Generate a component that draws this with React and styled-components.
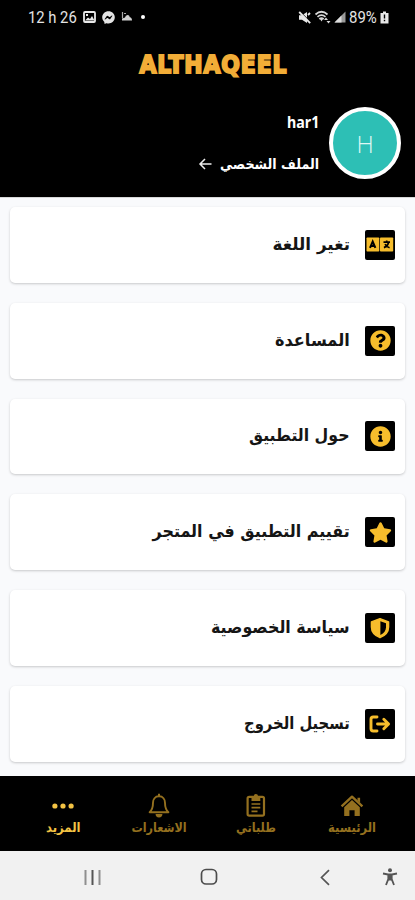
import React from "react";
import styled, { createGlobalStyle } from "styled-components";
import {
  FaQuestionCircle,
  FaInfoCircle,
  FaStar,
  FaFacebookMessenger,
} from "react-icons/fa";

const LanguageIcon = () => (
  <svg width="28" height="15" viewBox="0 0 28 15">
    <rect x="0.5" y="0.5" width="12.8" height="14" rx="0.8" fill="#f6bd2c" />
    <rect x="14" y="0.5" width="13.2" height="14" rx="0.8" fill="#f6bd2c" />
    <path
      d="M4 10.800 6.700 4.600 9.400 10.800M5 9h3.400"
      fill="none"
      stroke="#000"
      strokeWidth="2"
    />
    <path
      d="M17.500 5.200h6.500M20.700 3.600v1.600M22.700 5.400c-.7 2.600-2.400 4.400-4.800 5.200M19 7.200c1 1.900 2.300 3 4.600 3.600"
      fill="none"
      stroke="#000"
      strokeWidth="1.700"
    />
  </svg>
);

const ShieldIcon = () => (
  <svg width="22" height="22" viewBox="0 0 22 22">
    <path
      d="M11 1.600 19.600 5v5c0 5-3.400 8.600-8.600 10.700C5.800 18.600 2.400 15 2.400 10V5Z"
      fill="#f6bd2c"
      stroke="#f6bd2c"
      strokeWidth="1.4"
      strokeLinejoin="round"
    />
    <path d="M11.400 4.200 17 6.300v4c0 3.300-2 5.900-5.600 7.700Z" fill="#000" />
  </svg>
);

const LogoutIcon = () => (
  <svg width="22" height="18" viewBox="0 0 22 18">
    <g
      fill="none"
      stroke="#f6bd2c"
      strokeWidth="2.9"
      strokeLinecap="round"
      strokeLinejoin="round"
    >
      <path d="M8 2H4.200Q2 2 2 4.200v9.600Q2 16 4.200 16H8" />
      <path d="M8.500 9H19M14.800 4.200 19.600 9l-4.800 4.800" />
    </g>
  </svg>
);

const HomeIcon = () => (
  <svg width="24" height="22" viewBox="0 0 24 22">
    <path
      d="M1.600 12.300 12 2.700l10.400 9.600"
      fill="none"
      stroke="currentColor"
      strokeWidth="2.400"
      strokeLinejoin="round"
    />
    <path
      d="M17.500 3.700h2.600v5l-2.600-2.200ZM12 6l7.800 7.200V22h-5.200v-5.700H9.400V22H4.200v-8.800Z"
      fill="currentColor"
    />
  </svg>
);

const OrdersIcon = () => (
  <svg width="20" height="24" viewBox="0 0 20 24">
    <g fill="none" stroke="currentColor" strokeWidth="2.200">
      <rect x="1.600" y="3.800" width="16.400" height="18.800" rx="1.600" />
      <path d="M5.500 11h8.800M5.500 14.700h8.800M5.500 18.400h6" strokeWidth="1.700" />
    </g>
    <path
      d="M5.500 3h2.300a2.100 2.100 0 0 1 4.200 0h2.300v5H5.500Z"
      fill="currentColor"
    />
  </svg>
);

const BellIcon = () => (
  <svg width="22" height="25" viewBox="0 0 22 25">
    <path
      d="M11 3.300c-4 0-6 3-6 6.500 0 5-1.300 7.600-3.400 9.400h18.800c-2.100-1.800-3.400-4.400-3.400-9.400 0-3.500-2-6.500-6-6.500Z"
      fill="none"
      stroke="currentColor"
      strokeWidth="1.900"
      strokeLinejoin="round"
    />
    <path
      d="M10 .8h2v2.700h-2ZM7.600 21h6.800a3.400 3.400 0 0 1-6.800 0Z"
      fill="currentColor"
    />
  </svg>
);

const MoreIcon = () => (
  <svg width="22" height="9" viewBox="0 0 22 9" fill="currentColor">
    <circle cx="2.900" cy="5" r="2.600" />
    <circle cx="11" cy="5" r="2.600" />
    <circle cx="19.100" cy="5" r="2.600" />
  </svg>
);

const menu = [
  { label: "تغير اللغة", icon: <LanguageIcon />, width: 77 },
  { label: "المساعدة", icon: <FaQuestionCircle size={21} />, width: 75 },
  { label: "حول التطبيق", icon: <FaInfoCircle size={21} />, width: 101 },
  { label: "تقييم التطبيق في المتجر", icon: <FaStar size={23} />, width: 197 },
  { label: "سياسة الخصوصية", icon: <ShieldIcon />, width: 139 },
  { label: "تسجيل الخروج", icon: <LogoutIcon />, width: 106 },
];

const tabs = [
  { label: "الرئيسية", icon: <HomeIcon />, width: 48 },
  { label: "طلباتي", icon: <OrdersIcon />, width: 40 },
  { label: "الاشعارات", icon: <BellIcon />, width: 55 },
  { label: "المزيد", icon: <MoreIcon />, width: 35, active: true },
];

// squeezes a line of text to the given width
const Fit = ({ width, children }) => {
  const ref = React.useRef(null);
  const [scale, setScale] = React.useState(1);
  React.useLayoutEffect(() => {
    setScale(width / ref.current.offsetWidth);
  }, [width]);
  return (
    <FitBox $width={width}>
      <FitText ref={ref} style={{ transform: `scaleX(${scale})` }}>
        {children}
      </FitText>
    </FitBox>
  );
};

const App = () => {
  return (
    <Screen>
      <GlobalStyle />
      <Header>
        <StatusBar>
          <StatusGroup>
            <Fit width={49}>12 h 26</Fit>
            <svg width="13" height="12" viewBox="0 0 13 12">
              <rect x="1" y="1" width="11" height="10" rx="1" fill="none" stroke="#e8e8e8" strokeWidth="1.800" />
              <path d="M2 9.500 5 6.500l2 1.500 2-3 2.500 4.500ZM3 3h2v2H3Z" fill="#e8e8e8" />
            </svg>
            <FaFacebookMessenger size={13} />
            <svg width="12" height="10" viewBox="0 0 12 10">
              <path d="M1.500 0v6M3 1.500h2" stroke="#aaa" strokeWidth="1.200" />
              <path d="M1 8.500V6.500Q3 6 4 5.500 4.500 3 6.500 3q2 0 2.300 2.200Q11 5.500 11 8.500Z" fill="#d0d0d0" />
            </svg>
            <Dot />
          </StatusGroup>
          <StatusGroup $tight>
            <svg width="13" height="13" viewBox="0 0 13 13">
              <path d="M1 4.200h3L9 1v11L4 8.800H1Z" fill="#e8e8e8" />
              <path d="m2.200.800 10.600 10.600" stroke="#000" strokeWidth="1.200" />
              <path d="m1.200 1 11 11.200M10 4l2-2" stroke="#e8e8e8" strokeWidth="1.800" />
            </svg>
            <svg width="17" height="14" viewBox="0 0 17 14">
              <g fill="none" stroke="#d8d8d8" strokeWidth="1.700">
                <path d="M1.500 4.500Q7.500-1 13.500 4.500M3.500 6.800q4-3.400 8 0M5.300 9q2.200-1.800 4.400 0" />
              </g>
              <path d="M6 9h3l-1.500 2.500ZM12 7.500l2 2.600h-4ZM14.500 13.500l-2-2.600h4Z" fill="#d8d8d8" />
            </svg>
            <svg width="12" height="12" viewBox="0 0 12 12">
              <path d="M11.500.5v11H.5Z" fill="#999" />
              <path d="M7.500 4.500v7h-7Z" fill="#ddd" />
            </svg>
            <Fit width={28}>89%</Fit>
            <svg width="9" height="13" viewBox="0 0 9 13">
              <path d="M3 .5h3V2h2.500v10.500h-8V2H3Z" fill="#e8e8e8" />
              <path d="M4.500 3.500v4M4.500 8.700v1.500" stroke="#000" strokeWidth="1.400" />
            </svg>
          </StatusGroup>
        </StatusBar>
        <Brand>
          <Fit width={148}>ALTHAQEEL</Fit>
        </Brand>
        <Profile>
          <Avatar>H</Avatar>
          <ProfileText>
            <Name>
              <Fit width={32}>har1</Fit>
            </Name>
            <ProfileLink>
              <Fit width={99}>الملف الشخصي</Fit>
              <svg width="14" height="12" viewBox="0 0 14 12">
                <path
                  d="M13.500 6H2M7 1 2 6l5 5"
                  fill="none"
                  stroke="#eee"
                  strokeWidth="1.500"
                />
              </svg>
            </ProfileLink>
          </ProfileText>
        </Profile>
      </Header>
      <Menu>
        {menu.map((item) => (
          <Card key={item.label}>
            <IconTile>{item.icon}</IconTile>
            <CardLabel>
              <Fit width={item.width}>{item.label}</Fit>
            </CardLabel>
          </Card>
        ))}
      </Menu>
      <TabBar>
        {tabs.map((tab) => (
          <Tab key={tab.label} $active={tab.active}>
            <TabIcon>{tab.icon}</TabIcon>
            <Fit width={tab.width}>{tab.label}</Fit>
          </Tab>
        ))}
      </TabBar>
      <SystemBar>
        <svg width="17" height="17" viewBox="0 0 17 17">
          <path d="M1.500 1v15M15.500 1v15" stroke="#8f8f8f" strokeWidth="2" />
          <path d="M8.500 1v15" stroke="#555" strokeWidth="2" />
        </svg>
        <svg width="18" height="18" viewBox="0 0 18 18">
          <rect x="1.500" y="1.500" width="15" height="14.500" rx="4.500" fill="none" stroke="#4c4c4c" strokeWidth="1.700" />
        </svg>
        <svg width="10" height="17" viewBox="0 0 10 17">
          <path d="M9 1.200 1.500 8.500 9 15.800" fill="none" stroke="#555" strokeWidth="1.700" />
        </svg>
        <svg width="16" height="18" viewBox="0 0 16 18">
          <circle cx="8" cy="2.200" r="2" fill="#555" />
          <path
            d="M1 5.500 6 6.500h4l5-1M6.300 6v5L4 17M9.700 6v5l2.300 6"
            fill="none"
            stroke="#555"
            strokeWidth="1.800"
          />
          <path d="M6 6h4v6.500H6Z" fill="#555" />
        </svg>
      </SystemBar>
    </Screen>
  );
};

export default App;

//
const GlobalStyle = createGlobalStyle`
  * {
    box-sizing: border-box;
  }
  body {
    margin: 0;
    font-family: "DejaVu Sans", sans-serif;
  }
  svg {
    display: block;
    flex: none;
  }
`;

const Screen = styled.div`
  direction: rtl;
  width: 415px;
  height: 900px;
  display: flex;
  flex-direction: column;
  overflow: hidden;
  background: #f9fafc;
`;
const FitBox = styled.span`
  display: flex;
  justify-content: center;
  width: ${(p) => p.$width}px;
  flex: none;
`;
const FitText = styled.span`
  flex: none;
  white-space: nowrap;
`;
const Header = styled.header`
  height: 197px;
  background: #000;
  display: flex;
  flex-direction: column;
`;
const StatusBar = styled.div`
  direction: ltr;
  height: 34px;
  padding: 0 26px 0 28px;
  display: flex;
  align-items: center;
  justify-content: space-between;
  font-family: Roboto, sans-serif;
  font-size: 16px;
  font-weight: 400;
  color: #e4e4e4;
`;
const StatusGroup = styled.div`
  display: flex;
  align-items: center;
  gap: ${(p) => (p.$tight ? "3px" : "6px")};
`;
const Dot = styled.span`
  width: 4px;
  height: 4px;
  margin-left: 2px;
  border-radius: 50%;
  background: #fff;
`;
const Brand = styled.div`
  direction: ltr;
  height: 60px;
  display: flex;
  align-items: center;
  justify-content: center;
  padding-left: 12px;
  font-size: 25px;
  font-weight: 700;
  line-height: 1;
  letter-spacing: 1px;
  color: #f2ad37;
  -webkit-text-stroke: 2px #f2ad37;
  stroke-linejoin: round;
`;
const Profile = styled.div`
  display: flex;
  align-items: center;
  padding: 13px 14px 0;
  gap: 10px;
`;
const Avatar = styled.div`
  width: 72px;
  height: 72px;
  border: 4px solid #fff;
  border-radius: 50%;
  background: #2dbfb5;
  color: #dff8f4;
  display: flex;
  align-items: center;
  justify-content: center;
  font-family: "Open Sans", sans-serif;
  font-size: 24px;
  font-weight: 300;
`;
const ProfileText = styled.div`
  display: flex;
  flex-direction: column;
  gap: 22px;
  color: #fff;
  font-weight: 700;
`;
const Name = styled.div`
  font-family: "Noto Sans", sans-serif;
  font-size: 16px;
  line-height: 20px;
`;
const ProfileLink = styled.div`
  display: flex;
  align-items: center;
  gap: 8px;
  font-size: 14px;
  line-height: 20px;
`;
const Menu = styled.main`
  height: 579px;
  padding: 9px 10px 0 10px;
  display: flex;
  flex-direction: column;
  gap: 20px;
  border-top: 1px solid #d8d8d8;
`;
const Card = styled.div`
  height: 75.8px;
  flex: none;
  display: flex;
  align-items: center;
  gap: 15px;
  padding-right: 10px;
  border-radius: 5px;
  background: #fff;
  box-shadow: 0 1px 2.5px rgba(0, 0, 0, 0.2);
`;
const IconTile = styled.div`
  width: 30px;
  height: 30px;
  display: flex;
  align-items: center;
  justify-content: center;
  border-radius: 2px;
  background: #000;
  color: #f6bd2c;
`;
const CardLabel = styled.div`
  font-size: 17px;
  font-weight: 700;
  line-height: 28px;
  padding-bottom: 2px;
  color: #151515;
`;
const TabBar = styled.nav`
  height: 75px;
  padding: 15px 15px 0;
  display: grid;
  grid-template-columns: repeat(4, 1fr);
  background: #000;
`;
const Tab = styled.div`
  display: flex;
  flex-direction: column;
  align-items: center;
  font-size: 13px;
  line-height: 18px;
  font-weight: 700;
  color: ${(p) => (p.$active ? "#f3c344" : "#94701f")};
`;
const TabIcon = styled.div`
  height: 28px;
  display: flex;
  align-items: center;
`;
const SystemBar = styled.footer`
  direction: ltr;
  height: 49px;
  display: grid;
  grid-template-columns: 117px 115px 117px 14px;
  justify-items: center;
  align-items: center;
  padding: 3px 0 0 34px;
  background: #f1f1f1;
`;
